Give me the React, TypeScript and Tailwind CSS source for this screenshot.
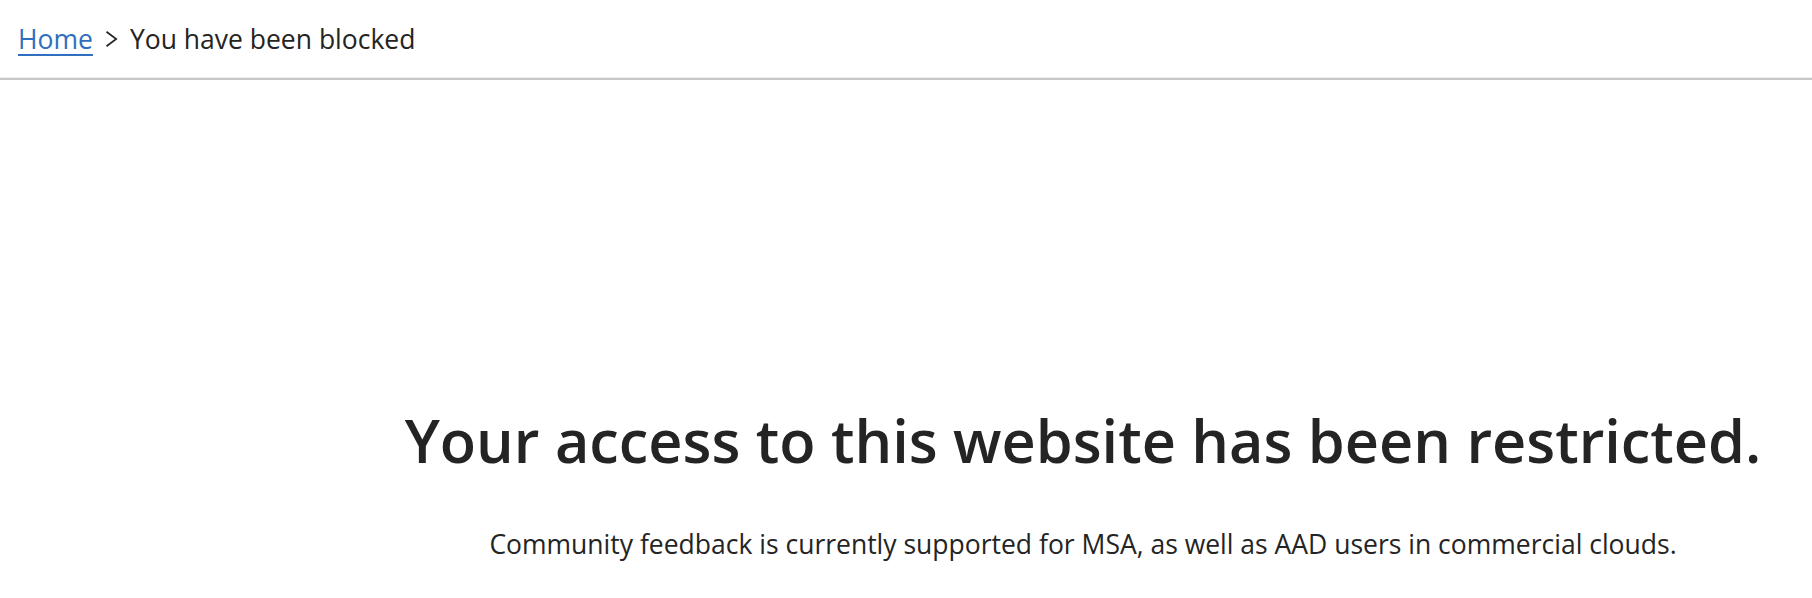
export default function App() {
  return (
    <div className="min-h-screen bg-white text-[#242424]" style={{ fontFamily: '"Open Sans", "Noto Sans", sans-serif' }}>
      <nav className="flex h-[80px] items-center border-b-2 border-[#c8c8c8] px-[18px] shadow-[0_-1px_0_#eeeeee_inset]">
        <ol className="flex items-center gap-[12px] text-[26.5px] leading-none">
          <li>
            <a href="#" className="text-[#2e6fc0] underline decoration-[2px] underline-offset-[5px]">
              Home
            </a>
          </li>
          <li aria-hidden="true" className="flex items-center">
            <svg width="13" height="16" viewBox="0 0 13 16" fill="none">
              <path d="M1.5 0.8 L11.2 8 L1.5 15.2" stroke="#242424" strokeWidth="1.7" strokeLinejoin="miter" />
            </svg>
          </li>
          <li>You have been blocked</li>
        </ol>
      </nav>
      <main className="flex flex-col items-center pl-[354px] pt-[325px] text-center">
        <h1 className="whitespace-nowrap text-[59.4px] font-semibold leading-[1.2]">
          Your access to this website has been restricted.
        </h1>
        <p className="mt-[51px] whitespace-nowrap text-[26.5px] leading-[1.3]">
          Community feedback is currently supported for MSA, as well as AAD users in commercial clouds.
        </p>
      </main>
    </div>
  );
}
